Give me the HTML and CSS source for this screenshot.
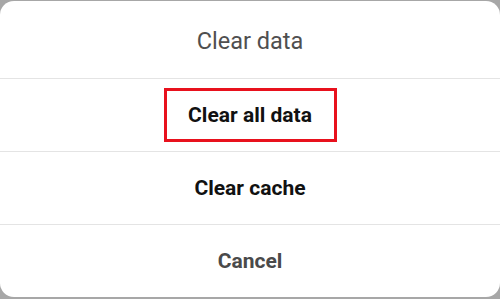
FILE: index.html
```html
<!DOCTYPE html>
<html>
<head>
<meta charset="utf-8">
<link rel="stylesheet" href="styles.css">
</head>
<body>
<div class="sheet">
  <div class="title">Clear data</div>
  <div class="row"><span class="hl">Clear all data</span></div>
  <div class="row">Clear cache</div>
  <div class="row cancel">Cancel</div>
</div>
</body>
</html>
```
FILE: styles.css
```css
html, body {
  margin: 0;
  padding: 0;
  background: #a7a7a7;
  width: 500px;
  height: 299px;
  overflow: hidden;
  font-family: Roboto, "Liberation Sans", sans-serif;
}
.sheet {
  margin-top: 1px;
  height: 296px;
  background: #fff;
  border-radius: 14px;
  overflow: hidden;
  display: flex;
  flex-direction: column;
}
.title {
  height: 77px;
  display: flex;
  align-items: center;
  justify-content: center;
  font-size: 23.5px;
  color: #4f4f4f;
  padding-top: 2px;
  box-sizing: border-box;
}
.row {
  height: 73px;
  border-top: 1px solid #e4e4e4;
  box-sizing: border-box;
  display: flex;
  align-items: center;
  justify-content: center;
  font-size: 21px;
  font-weight: 700;
  color: #111;
}
.row.cancel {
  color: #4a4a4a;
}
.hl {
  width: 173px;
  height: 54px;
  box-sizing: border-box;
  border: 3px solid #e8111d;
  display: flex;
  align-items: center;
  justify-content: center;
}
```
